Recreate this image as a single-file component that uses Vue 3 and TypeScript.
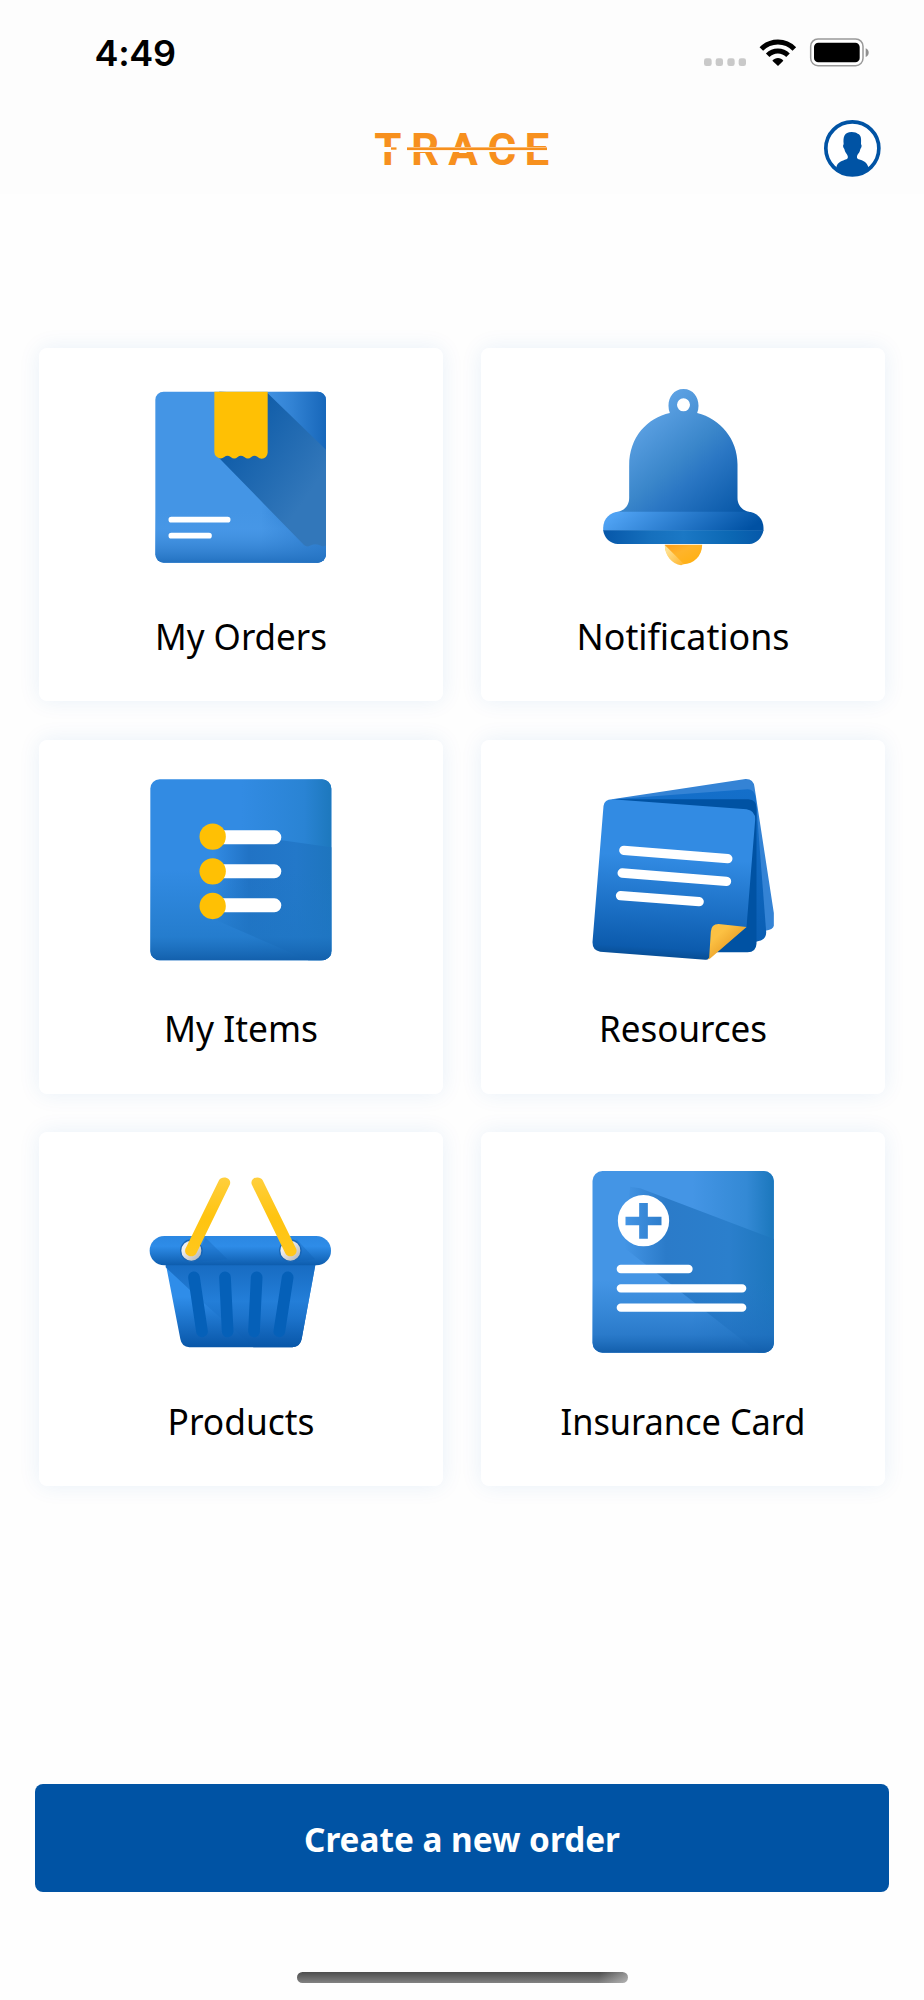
<script setup lang="ts">
interface Tile {
  id: string
  label: string
  labelWidth: number
  viewBox: string
}

const tiles: Tile[] = [
  { id: 'orders', label: 'My Orders', labelWidth: 172, viewBox: '360 157 543 543' },
  { id: 'notifications', label: 'Notifications', labelWidth: 213, viewBox: '368.5 157 543 543' },
  { id: 'items', label: 'My Items', labelWidth: 154, viewBox: '360 148 543 543' },
  { id: 'resources', label: 'Resources', labelWidth: 168, viewBox: '368.5 148 543 543' },
  { id: 'products', label: 'Products', labelWidth: 147, viewBox: '360 156 543 543' },
  { id: 'insurance', label: 'Insurance Card', labelWidth: 245, viewBox: '368.5 156 543 543' },
]
</script>

<template>
  <div class="screen">
    <header class="top">
      <div class="status-bar">
        <span class="time">4:49</span>
        <svg class="status-icons" viewBox="70 50 500 90">
          <g fill="#c9c9c9">
            <rect x="73" y="114" width="23" height="23" rx="7" />
            <rect x="108" y="114" width="22" height="23" rx="7" />
            <rect x="143" y="114" width="22" height="23" rx="7" />
            <rect x="177" y="114" width="22" height="23" rx="7" />
          </g>
          <g fill="none" stroke="#000" stroke-width="15">
            <path d="M245 86 C273 58 317 58 344 86" />
            <path d="M264 105 C281 88 308 88 325 105" />
          </g>
          <path d="M278 121 C287 110 303 110 311 121 L295 137 Z" />
          <rect x="393" y="56" width="157" height="80" rx="22" fill="#fff" stroke="#999" stroke-width="4.5" />
          <rect x="403" y="67" width="137" height="59" rx="13" />
          <path d="M558 84 C570 88 570 106 558 110 Z" fill="#8f8f8f" />
        </svg>
      </div>
      <div class="nav-bar">
        <svg class="logo" viewBox="372 125 180 48">
          <text x="374.3 411 448.2 487.6 524.6" y="165.3">TRACE</text>
          <rect x="380" y="147" width="171" height="5" fill="#fdfdfd" />
          <rect x="407" y="147.4" width="140" height="2.7" />
          <rect x="391" y="147.4" width="5.5" height="2.3" />
        </svg>
        <svg class="avatar" viewBox="433 300 170 170">
          <circle cx="518" cy="385" r="79.5" fill="#fff" stroke="#0053a4" stroke-width="11" />
          <path
            fill="#0053a4"
            d="M470 442 C474 425 488 423 500 418 C507 415 505 407 501 402 C496 396 495 391 494 387 C490 384 489 375 492 373 C490 350 493 337 516 336 C526 336 530 339 534 341 C545 344 545 358 544 373 C547 375 546 384 542 387 C541 392 540 397 535 402 C531 408 530 415 537 418 C550 422 562 426 566 442 C555 458 537 466 518 466 C499 466 480 457 470 442 Z"
          />
        </svg>
      </div>
    </header>

    <main class="tiles">
      <div v-for="tile in tiles" :key="tile.id" class="tile">
        <svg class="icon" :viewBox="tile.viewBox">
          <template v-if="tile.id === 'orders'">
            <defs>
              <linearGradient id="ordRight">
                <stop offset="0.62" stop-color="#1767ba" stop-opacity="0" />
                <stop offset="0.8" stop-color="#1767ba" stop-opacity="0.4" />
                <stop offset="1" stop-color="#1767ba" />
              </linearGradient>
              <linearGradient id="ordBottom" x2="0" y2="1">
                <stop offset="0.7" stop-color="#4a99e8" stop-opacity="0" />
                <stop offset="0.8" stop-color="#4a99e8" stop-opacity="0.4" />
                <stop offset="1" stop-color="#2371c0" />
              </linearGradient>
              <linearGradient id="ordShade" x2="1" y2="1">
                <stop offset="0.2" stop-color="#0f5ca8" />
                <stop offset="0.75" stop-color="#3277ba" />
              </linearGradient>
            </defs>
            <rect x="376" y="171" width="512" height="513" rx="25" fill="#4495e5" />
            <rect x="376" y="171" width="512" height="513" rx="25" fill="url(#ordRight)" />
            <rect x="376" y="171" width="512" height="513" rx="25" fill="url(#ordBottom)" />
            <path d="M713 176 L888 345 V632 Q879 639 870 632 Q853 624 838 634 Q830 638 822 631 L568 371 V171 Z" fill="url(#ordShade)" />
            <path
              d="M553 171 H713 V354 Q711 371 695 372 Q688 372 682 366 Q673 360 664 367 Q654 376 643 367 Q632 359 623 367 Q613 376 602 367 Q592 359 583 367 Q572 376 560 366 Q553 361 553 352 Z"
              fill="#ffc004"
            />
            <path d="M424 555 H593 M424 603 H537" class="line" stroke-width="17" />
          </template>

          <template v-else-if="tile.id === 'notifications'">
            <defs>
              <linearGradient id="bellBody" x1="500" y1="220" x2="790" y2="560" gradientUnits="userSpaceOnUse">
                <stop offset="0" stop-color="#64a7e9" />
                <stop offset="0.45" stop-color="#3a86ca" />
                <stop offset="0.6" stop-color="#2b77c4" />
                <stop offset="1" stop-color="#0656a6" />
              </linearGradient>
              <linearGradient id="bellRim" x1="450" y1="530" x2="610" y2="750" gradientUnits="userSpaceOnUse">
                <stop offset="0" stop-color="#4fa2f3" />
                <stop offset="1" stop-color="#0051a3" />
              </linearGradient>
              <linearGradient id="bellBase">
                <stop offset="0" stop-color="#0657a9" />
                <stop offset="0.3" stop-color="#1670bd" />
                <stop offset="0.5" stop-color="#1b78c5" />
                <stop offset="0.8" stop-color="#0b67b3" />
                <stop offset="1" stop-color="#0658a9" />
              </linearGradient>
              <linearGradient id="clapper" x2="1" y2="1">
                <stop offset="0" stop-color="#ff9e1b" />
                <stop offset="0.4" stop-color="#ffb42a" />
                <stop offset="1" stop-color="#ffaf0c" />
              </linearGradient>
              <linearGradient id="clapperLit" x2="1" y2="1">
                <stop offset="0.2" stop-color="#ffe08e" />
                <stop offset="1" stop-color="#ffb42a" />
              </linearGradient>
            </defs>
            <path d="M584 627 A56 59 0 0 0 696 627 Z" fill="url(#clapper)" transform="translate(0 3)" />
            <path d="M584 631 A56 60 0 0 0 633 692 L641 688 Z" fill="url(#clapperLit)" />
            <path
              fill-rule="evenodd"
              d="M440 532 C464 528 477 511 477 490 V393 C477 306 532 250 599 235 C587 204 602 163 640 163 C678 163 693 204 681 235 C751 252 802 314 802 389 V490 C802 512 817 528 838 532 Z M640 191 A19 19 0 1 0 640 230 A19 19 0 1 0 640 191 Z"
              fill="url(#bellBody)"
            />
            <path d="M399 588 V580 C399 552 420 531 447 531 H832 C859 531 880 552 880 580 V588 Z" fill="url(#bellRim)" />
            <path d="M399 587 H880 C876 610 858 628 838 628 H443 C420 628 402 610 399 587 Z" fill="url(#bellBase)" />
          </template>

          <template v-else-if="tile.id === 'items'">
            <defs>
              <linearGradient id="itmRight">
                <stop offset="0.5" stop-color="#1d78bd" stop-opacity="0" />
                <stop offset="0.85" stop-color="#1d78bd" stop-opacity="0.4" />
                <stop offset="1" stop-color="#1d78bd" />
              </linearGradient>
              <linearGradient id="itmShade">
                <stop offset="0" stop-color="#2173c7" stop-opacity="0" />
                <stop offset="0.3" stop-color="#2173c5" />
                <stop offset="0.7" stop-color="#2378c9" />
                <stop offset="1" stop-color="#1e75be" />
              </linearGradient>
              <linearGradient id="itmBottom" x2="0" y2="1">
                <stop offset="0.5" stop-color="#1f78c5" stop-opacity="0" />
                <stop offset="0.87" stop-color="#1f76c4" stop-opacity="0.7" />
                <stop offset="1" stop-color="#1360ac" />
              </linearGradient>
            </defs>
            <rect x="361" y="149" width="543" height="543" rx="28" fill="#328be3" />
            <rect x="361" y="149" width="543" height="543" rx="28" fill="url(#itmRight)" />
            <path d="M550 300 L755 332 L904 353 V672 Q900 690 870 692 H835 L555 570 Z" fill="url(#itmShade)" />
            <rect x="361" y="149" width="543" height="543" rx="28" fill="url(#itmBottom)" />
            <path d="M570 323 H733 M570 425 H733 M570 527 H733" class="line" stroke-width="42" />
            <g fill="#ffc004">
              <circle cx="548" cy="321" r="39.5" />
              <circle cx="548" cy="425" r="39.5" />
              <circle cx="548" cy="529" r="39.5" />
            </g>
          </template>

          <template v-else-if="tile.id === 'resources'">
            <defs>
              <linearGradient id="resPage" x1="0.53" x2="0.47" y2="1">
                <stop offset="0" stop-color="#328be3" />
                <stop offset="0.36" stop-color="#328be3" />
                <stop offset="0.7" stop-color="#1b6fc4" />
                <stop offset="0.93" stop-color="#0c5bad" />
                <stop offset="1" stop-color="#064b8f" />
              </linearGradient>
              <linearGradient id="resFold" x2="1" y2="1">
                <stop offset="0.3" stop-color="#fcc143" />
                <stop offset="0.6" stop-color="#eda52c" />
              </linearGradient>
              <linearGradient id="resMid" x2="0" y2="1">
                <stop offset="0" stop-color="#146fca" />
                <stop offset="1" stop-color="#0a5eb3" />
              </linearGradient>
            </defs>
            <path d="M425 209 L826 148 Q850 147 853 172 L911 550 V588 Q909 600 885 603 L700 500 Z" fill="#3483d5" />
            <path d="M430 209 L832 179 Q853 178 857 205 L888 606 Q889 632 858 636 L700 560 Z" fill="url(#resMid)" />
            <path d="M435 209 H835 Q859 211 859 235 V642 Q858 667 832 668 H700 V400 Z" fill="#0052a3" />
            <path
              d="M425 209 L829 239 Q856 243 855 270 L829 592 L715 687 Q712 691 705 690 L390 666 Q367 663 367 638 L400 229 Q403 209 425 209 Z"
              fill="url(#resPage)"
            />
            <path d="M829 592 L745 583 Q723 584 722 606 L717 684 Q714 688 709 690 L719 687 Z" fill="url(#resFold)" />
            <path d="M461 362 L773 387 M456 430 L769 455 M451 498 L687 516" class="line" stroke-width="28" />
          </template>

          <template v-else-if="tile.id === 'products'">
            <defs>
              <linearGradient id="prdRim" x2="0" y2="1">
                <stop offset="0" stop-color="#2b87e2" />
                <stop offset="0.35" stop-color="#2e8ce8" />
                <stop offset="1" stop-color="#0d5cad" />
              </linearGradient>
              <linearGradient id="prdLit" x2="0" y2="1">
                <stop offset="0.4" stop-color="#2f8de9" />
                <stop offset="1" stop-color="#0856a8" />
              </linearGradient>
              <linearGradient id="prdBody" x2="0" y2="1">
                <stop offset="0" stop-color="#176bc1" />
                <stop offset="0.45" stop-color="#237ed8" />
                <stop offset="0.65" stop-color="#1c73cb" />
                <stop offset="1" stop-color="#0856a8" />
              </linearGradient>
              <linearGradient id="prdHandle" x2="0" y2="1">
                <stop offset="0" stop-color="#ffcf3d" />
                <stop offset="0.5" stop-color="#ffc410" />
                <stop offset="1" stop-color="#ffc71c" />
              </linearGradient>
              <linearGradient id="prdRing" x2="1" y2="1">
                <stop offset="0.3" stop-color="#efefef" />
                <stop offset="0.9" stop-color="#b5b7ba" />
              </linearGradient>
            </defs>
            <path d="M407 430 H857 L815 657 Q811 680 787 682 H478 Q455 680 451 657 Z" fill="url(#prdLit)" />
            <path d="M407 430 H857 L815 657 Q811 680 787 682 H670 L525 552 L407 442 Z" fill="url(#prdBody)" />
            <g fill="none" stroke="#0560b8" stroke-width="35" stroke-linecap="round">
              <path d="M492 472 L516 634 M585 472 L593 634 M680 472 L672 634 M773 472 L748 634" />
            </g>
            <rect x="359" y="348" width="544" height="88" rx="44" fill="url(#prdRim)" />
            <path d="M527 353 L592 418 L490 425 Z M800 358 L855 418 L785 425 Z" fill="#1060b4" opacity="0.3" />
            <g fill="url(#prdRing)" stroke="#1765b6" stroke-width="4">
              <circle cx="484" cy="392" r="32" />
              <circle cx="781" cy="392" r="32" />
            </g>
            <path d="M567 181 C575 165 606 172 600 193 L500 398 C491 418 460 408 466 387 Z" fill="url(#prdHandle)" />
            <path d="M698 181 C690 165 659 172 665 193 L765 398 C774 418 805 408 799 387 Z" fill="url(#prdHandle)" />
          </template>

          <template v-else>
            <defs>
              <linearGradient id="insRight">
                <stop offset="0.55" stop-color="#1b77bc" stop-opacity="0" />
                <stop offset="0.85" stop-color="#1b77bc" stop-opacity="0.4" />
                <stop offset="1" stop-color="#1b77bc" />
              </linearGradient>
              <linearGradient id="insShade">
                <stop offset="0" stop-color="#2b7bc9" stop-opacity="0" />
                <stop offset="0.28" stop-color="#2b7bc9" />
                <stop offset="0.7" stop-color="#2b7fcc" />
                <stop offset="1" stop-color="#1d76bd" />
              </linearGradient>
              <linearGradient id="insBottom" x2="0" y2="1">
                <stop offset="0.6" stop-color="#2376c5" stop-opacity="0" />
                <stop offset="0.9" stop-color="#1f6fbf" stop-opacity="0.7" />
                <stop offset="1" stop-color="#125eab" />
              </linearGradient>
            </defs>
            <rect x="367" y="153" width="544" height="545" rx="30" fill="#4495e5" />
            <rect x="367" y="153" width="544" height="545" rx="30" fill="url(#insRight)" />
            <path d="M480 200 L510 205 L911 357 V670 Q907 696 880 698 H865 L462 383 Z" fill="url(#insShade)" />
            <rect x="367" y="153" width="544" height="545" rx="30" fill="url(#insBottom)" />
            <path
              fill-rule="evenodd"
              fill="#fff"
              d="M520 225 A77 77 0 1 0 520 379 A77 77 0 1 0 520 225 Z M507 249 H533 V290 H574 V316 H533 V356 H507 V316 H466 V290 H507 Z"
            />
            <path d="M452 447 H655 M452 505 H816 M452 563 H816" class="line" stroke-width="25" />
          </template>
        </svg>
        <svg class="label" viewBox="0 0 404 64">
          <text x="202" y="42" :textLength="tile.labelWidth" lengthAdjust="spacingAndGlyphs">{{ tile.label }}</text>
        </svg>
      </div>
    </main>

    <button class="create">
      <svg viewBox="0 0 854 108">
        <text x="427" y="68" textLength="316" lengthAdjust="spacingAndGlyphs">Create a new order</text>
      </svg>
    </button>
    <div class="home-indicator"></div>
  </div>
</template>

<style>
body {
  margin: 0;
  background: #fefefe;
}
</style>

<style scoped>
.screen {
  box-sizing: border-box;
  width: 924px;
  height: 2000px;
  display: flex;
  flex-direction: column;
  align-items: center;
  background: #fefefe;
  overflow: hidden;
}

.top {
  width: 100%;
  height: 194px;
  background: #fdfdfd;
}

.status-bar {
  display: flex;
  justify-content: space-between;
  align-items: center;
  height: 104px;
  padding: 0 54px 0 94.5px;
  box-sizing: border-box;
}

.time {
  padding-top: 2px;
  font: 600 36px/44px Inter, sans-serif;
  letter-spacing: -0.3px;
  color: #000;
}

.status-icons {
  width: 166.7px;
  height: 30px;
}

.nav-bar {
  display: grid;
  grid-template-columns: 1fr auto 1fr;
  align-items: center;
  height: 90px;
  padding: 0 43px;
}

.logo {
  grid-column: 2;
  width: 180px;
  height: 48px;
  overflow: visible;
  fill: #f7901e;
}

.logo text {
  font: 700 44px Roboto, sans-serif;
}

.avatar {
  justify-self: end;
  width: 56.7px;
  height: 56.7px;
  margin-bottom: 1.4px;
}

.tiles {
  display: grid;
  grid-template-columns: 404px 404px;
  grid-auto-rows: 353.6px;
  gap: 38.6px;
  margin-top: 153.8px;
}

.tile {
  display: flex;
  flex-direction: column;
  align-items: center;
  box-sizing: border-box;
  padding-top: 39.5px;
  border-radius: 8px;
  background: #fff;
  box-shadow: 0 0 22px rgba(10, 95, 190, 0.09);
}

.icon {
  width: 181px;
  height: 181px;
  overflow: visible;
}

.line {
  fill: none;
  stroke: #fff;
  stroke-linecap: round;
}

.label {
  width: 404px;
  height: 64px;
  margin-top: 40px;
}

.label text {
  font: 400 36px "Noto Sans", sans-serif;
  text-anchor: middle;
}

.create {
  width: 854px;
  height: 108px;
  margin-top: 298px;
  padding: 0;
  border: 0;
  border-radius: 8px;
  background: #0053a4;
}

.create svg {
  display: block;
  width: 854px;
  height: 108px;
}

.create text {
  font: 700 34.5px "Noto Sans", sans-serif;
  text-anchor: middle;
  fill: #fff;
}

.home-indicator {
  width: 331px;
  height: 11px;
  margin-top: 80px;
  border-radius: 6px;
  background: linear-gradient(100deg, transparent 91%, rgba(255, 255, 255, 0.4)), linear-gradient(#4d4d4d, #828282);
}
</style>
